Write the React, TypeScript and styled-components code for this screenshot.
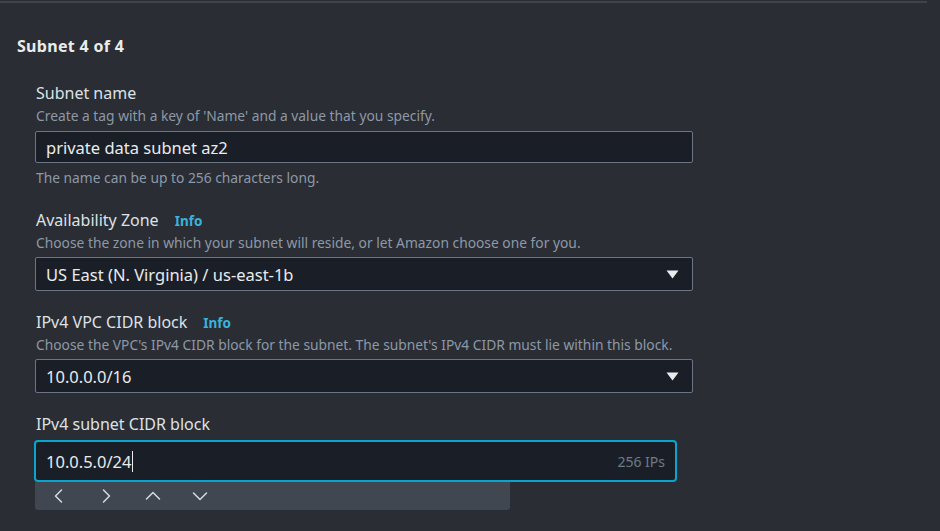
import React from "react";
import styled, { createGlobalStyle } from "styled-components";

const GlobalStyle = createGlobalStyle`
	html, body {
		margin: 0;
		padding: 0;
		background: #2a2d33;
	}
	body {
		font-family: "Noto Sans", "Open Sans", sans-serif;
		color: #d5dbe2;
	}
`;

const Page = styled.div`
	width: 940px;
	height: 531px;
	overflow: hidden;
	background: #2a2d33;
`;

const TopRule = styled.div`
	width: 927px;
	height: 2px;
	margin-top: 1px;
	background: #3f444c;
`;

const Section = styled.section`
	padding: 31px 0 0 17px;
`;

const SectionTitle = styled.h2`
	margin: 0;
	font-size: 16px;
	font-weight: 700;
	letter-spacing: 0.3px;
	line-height: 24px;
	color: #e9ebed;
`;

const Fields = styled.div`
	display: flex;
	flex-direction: column;
	gap: 20px;
	margin-top: 24px;
	padding-left: 19px;
`;

const Field = styled.div`
	display: flex;
	flex-direction: column;
`;

const LabelRow = styled.div`
	display: flex;
	align-items: baseline;
	gap: 16px;
`;

const Label = styled.label`
	font-size: 16px;
	line-height: 22px;
	color: #dde2e7;
`;

const InfoLink = styled.a`
	font-size: 13.5px;
	font-weight: 700;
	color: #39b2dd;
	text-decoration: none;
`;

const Description = styled.div`
	margin-top: 2px;
	font-size: 13.8px;
	line-height: 20px;
	color: #8d99a8;
	white-space: nowrap;
`;

const Constraint = styled.div`
	margin-top: 5px;
	margin-bottom: 1px;
	font-size: 13.8px;
	line-height: 20px;
	color: #8d99a8;
`;

const Box = styled.div<{ $focused?: boolean; $select?: boolean }>`
	display: flex;
	align-items: center;
	box-sizing: border-box;
	width: ${({ $focused }) => ($focused ? "643px" : "658px")};
	height: ${({ $focused, $select }) => ($focused ? "42px" : $select ? "34px" : "32px")};
	margin: ${({ $focused, $select }) => ($focused ? "5px 0 0 -2px" : $select ? "4px 0 0 -1px" : "5px 0 0 -1px")};
	padding: 0 10px 0 10px;
	background: #1a1f27;
	border: ${({ $focused }) => ($focused ? "2px solid #0aa5cf" : "1px solid #6b7583")};
	border-radius: ${({ $focused }) => ($focused ? "4px" : "2px")};
	font-size: 16.5px;
	color: #e9ebed;
`;

const Value = styled.span`
	flex: 1;
	white-space: nowrap;
`;

const Caret = styled.span`
	display: inline-block;
	width: 1px;
	height: 21px;
	margin-left: 1px;
	vertical-align: -4px;
	background: #e9ebed;
`;

const Suffix = styled.span`
	font-size: 14px;
	color: #6f7a87;
`;

const Arrow = styled.svg`
	width: 13px;
	height: 9px;
	margin-right: 3px;
`;

const Toolbar = styled.div`
	display: flex;
	align-items: center;
	gap: 31px;
	box-sizing: border-box;
	width: 475px;
	height: 28px;
	margin-left: -1px;
	padding-left: 16px;
	background: #414750;
	border-radius: 0 0 3px 3px;
`;

const ToolButton = styled.span`
	display: flex;
	align-items: center;
	justify-content: center;
	width: 16px;
	height: 16px;
	color: #d5dbe2;
`;

function Triangle() {
	return (
		<Arrow viewBox="0 0 13 9">
			<path d="M0.5 0.5 L12.5 0.5 L6.5 8.5 Z" fill="#e9ebed" />
		</Arrow>
	);
}

function Chevron({ d }: { d: string }) {
	return (
		<ToolButton>
			<svg width="16" height="16" viewBox="0 0 16 16" fill="none" stroke="currentColor" strokeWidth="1.5" strokeLinecap="round" strokeLinejoin="round">
				<path d={d} />
			</svg>
		</ToolButton>
	);
}

export default function App() {
	return (
		<Page>
			<GlobalStyle />
			<TopRule />
			<Section>
				<SectionTitle>Subnet 4 of 4</SectionTitle>
				<Fields>
					<Field>
						<Label>Subnet name</Label>
						<Description>Create a tag with a key of 'Name' and a value that you specify.</Description>
						<Box>
							<Value>private data subnet az2</Value>
						</Box>
						<Constraint>The name can be up to 256 characters long.</Constraint>
					</Field>
					<Field>
						<LabelRow>
							<Label>Availability Zone</Label>
							<InfoLink>Info</InfoLink>
						</LabelRow>
						<Description>Choose the zone in which your subnet will reside, or let Amazon choose one for you.</Description>
						<Box $select>
							<Value>US East (N. Virginia) / us-east-1b</Value>
							<Triangle />
						</Box>
					</Field>
					<Field>
						<LabelRow>
							<Label>IPv4 VPC CIDR block</Label>
							<InfoLink>Info</InfoLink>
						</LabelRow>
						<Description>Choose the VPC's IPv4 CIDR block for the subnet. The subnet's IPv4 CIDR must lie within this block.</Description>
						<Box $select>
							<Value>10.0.0.0/16</Value>
							<Triangle />
						</Box>
					</Field>
					<Field>
						<Label>IPv4 subnet CIDR block</Label>
						<Box $focused>
							<Value>
								10.0.5.0/24
								<Caret />
							</Value>
							<Suffix>256 IPs</Suffix>
						</Box>
						<Toolbar>
							<Chevron d="M10.5 2 L4.5 8 L10.5 14" />
							<Chevron d="M5.5 2 L11.5 8 L5.5 14" />
							<Chevron d="M1.5 11 L8 4.5 L14.5 11" />
							<Chevron d="M1.5 5 L8 11.5 L14.5 5" />
						</Toolbar>
					</Field>
				</Fields>
			</Section>
		</Page>
	);
}
